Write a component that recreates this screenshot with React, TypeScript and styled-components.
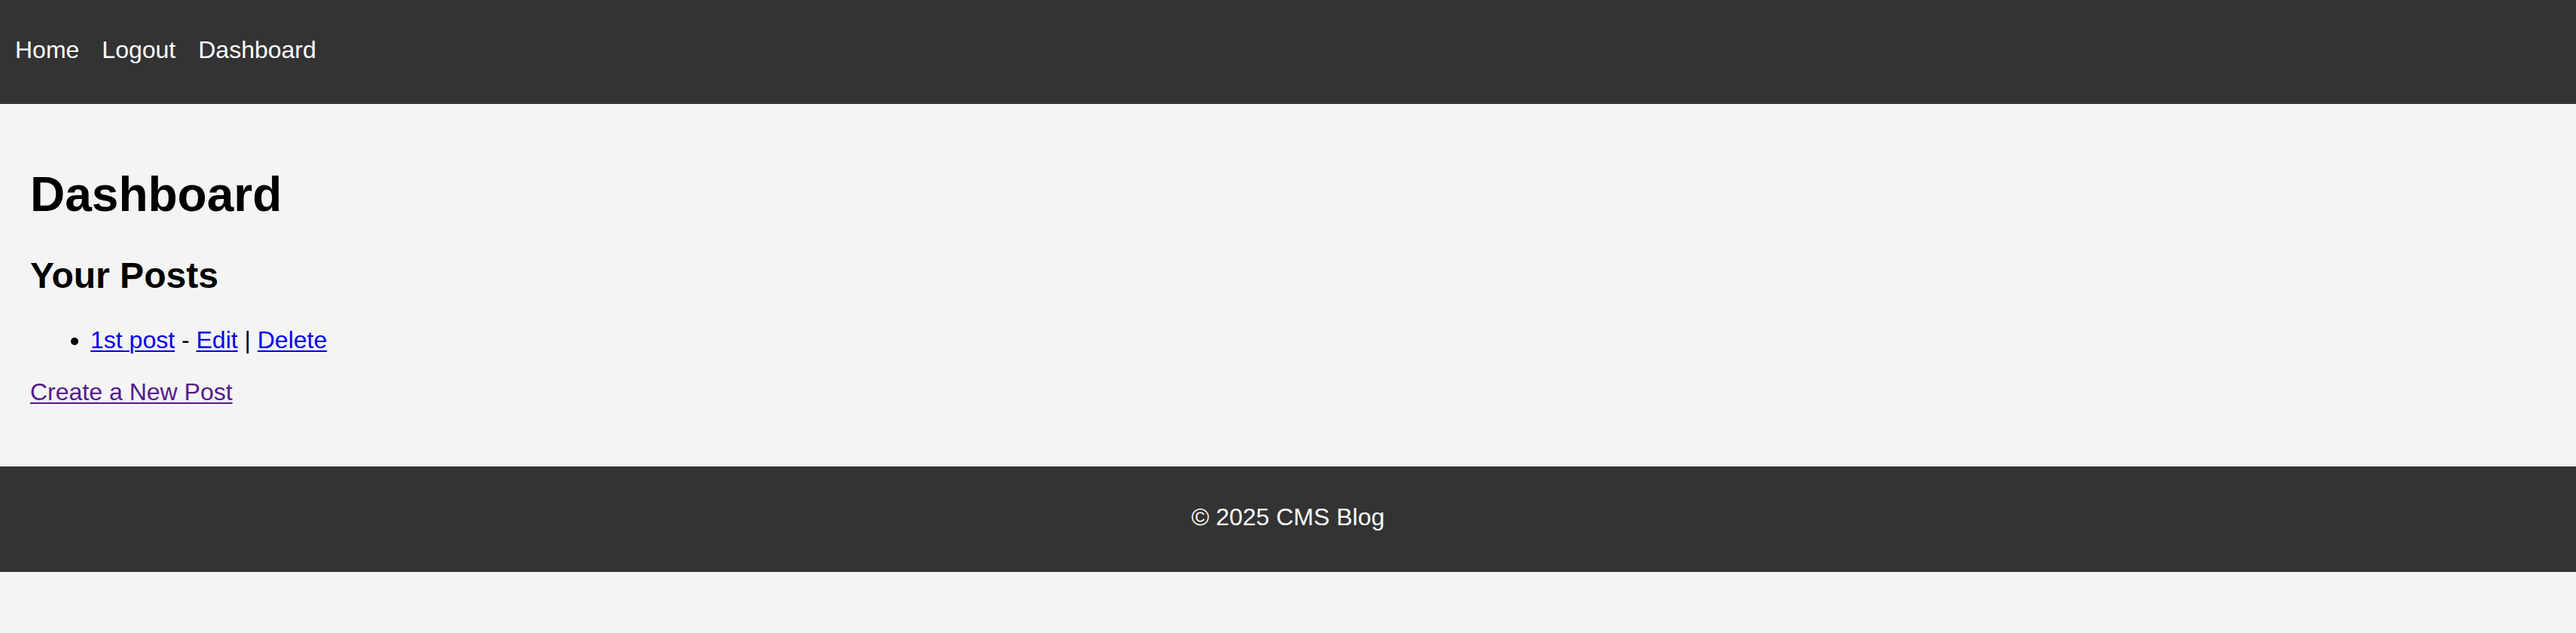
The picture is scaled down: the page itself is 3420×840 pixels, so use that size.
import React from "react";
import styled, { createGlobalStyle } from "styled-components";

const GlobalStyle = createGlobalStyle`
  html, body {
    margin: 0;
    padding: 0;
    background: #f4f4f4;
    font-family: "Liberation Sans", Arial, sans-serif;
    font-size: 32px;
    color: #000;
  }
  * { box-sizing: border-box; }
`;

const NavBar = styled.nav`
  background: #333;
  height: 138px;
  padding: 48px 20px 0 20px;
  display: flex;
  gap: 30px;
  align-items: flex-start;
`;

const NavLink = styled.a`
  color: #fff;
  text-decoration: none;
  font-size: 32px;
  line-height: normal;
`;

const Main = styled.main`
  padding: 40px 40px 48px 40px;
`;

const Title = styled.h1`
  font-size: 64px;
  font-weight: bold;
  margin: 42.88px 0;
`;

const SubTitle = styled.h2`
  font-size: 48px;
  font-weight: bold;
  margin: 39.84px 0;
`;

const PostList = styled.ul`
  margin: 32px 0;
  padding-left: 80px;
  list-style: disc;
`;

const PostItem = styled.li`
  font-size: 32px;
`;

const Link = styled.a<{ $visited?: boolean }>`
  color: ${(p) => (p.$visited ? "#551a8b" : "#0000ee")};
  text-decoration: underline;
  text-decoration-thickness: 2px;
  text-underline-offset: 3px;
`;

const Para = styled.p`
  margin: 32px 0;
`;

const Footer = styled.footer`
  background: #333;
  color: #fff;
  height: 140px;
  padding-top: 49px;
  text-align: center;
`;

const FooterText = styled.p`
  margin: 0;
  font-size: 32px;
`;

export default function App() {
  return (
    <>
      <GlobalStyle />
      <NavBar>
        <NavLink href="#">Home</NavLink>
        <NavLink href="#">Logout</NavLink>
        <NavLink href="#">Dashboard</NavLink>
      </NavBar>
      <Main>
        <Title>Dashboard</Title>
        <SubTitle>Your Posts</SubTitle>
        <PostList>
          <PostItem>
            <Link href="#">1st post</Link> - <Link href="#">Edit</Link> |{" "}
            <Link href="#">Delete</Link>
          </PostItem>
        </PostList>
        <Para>
          <Link href="#" $visited>
            Create a New Post
          </Link>
        </Para>
      </Main>
      <Footer>
        <FooterText>© 2025 CMS Blog</FooterText>
      </Footer>
    </>
  );
}
